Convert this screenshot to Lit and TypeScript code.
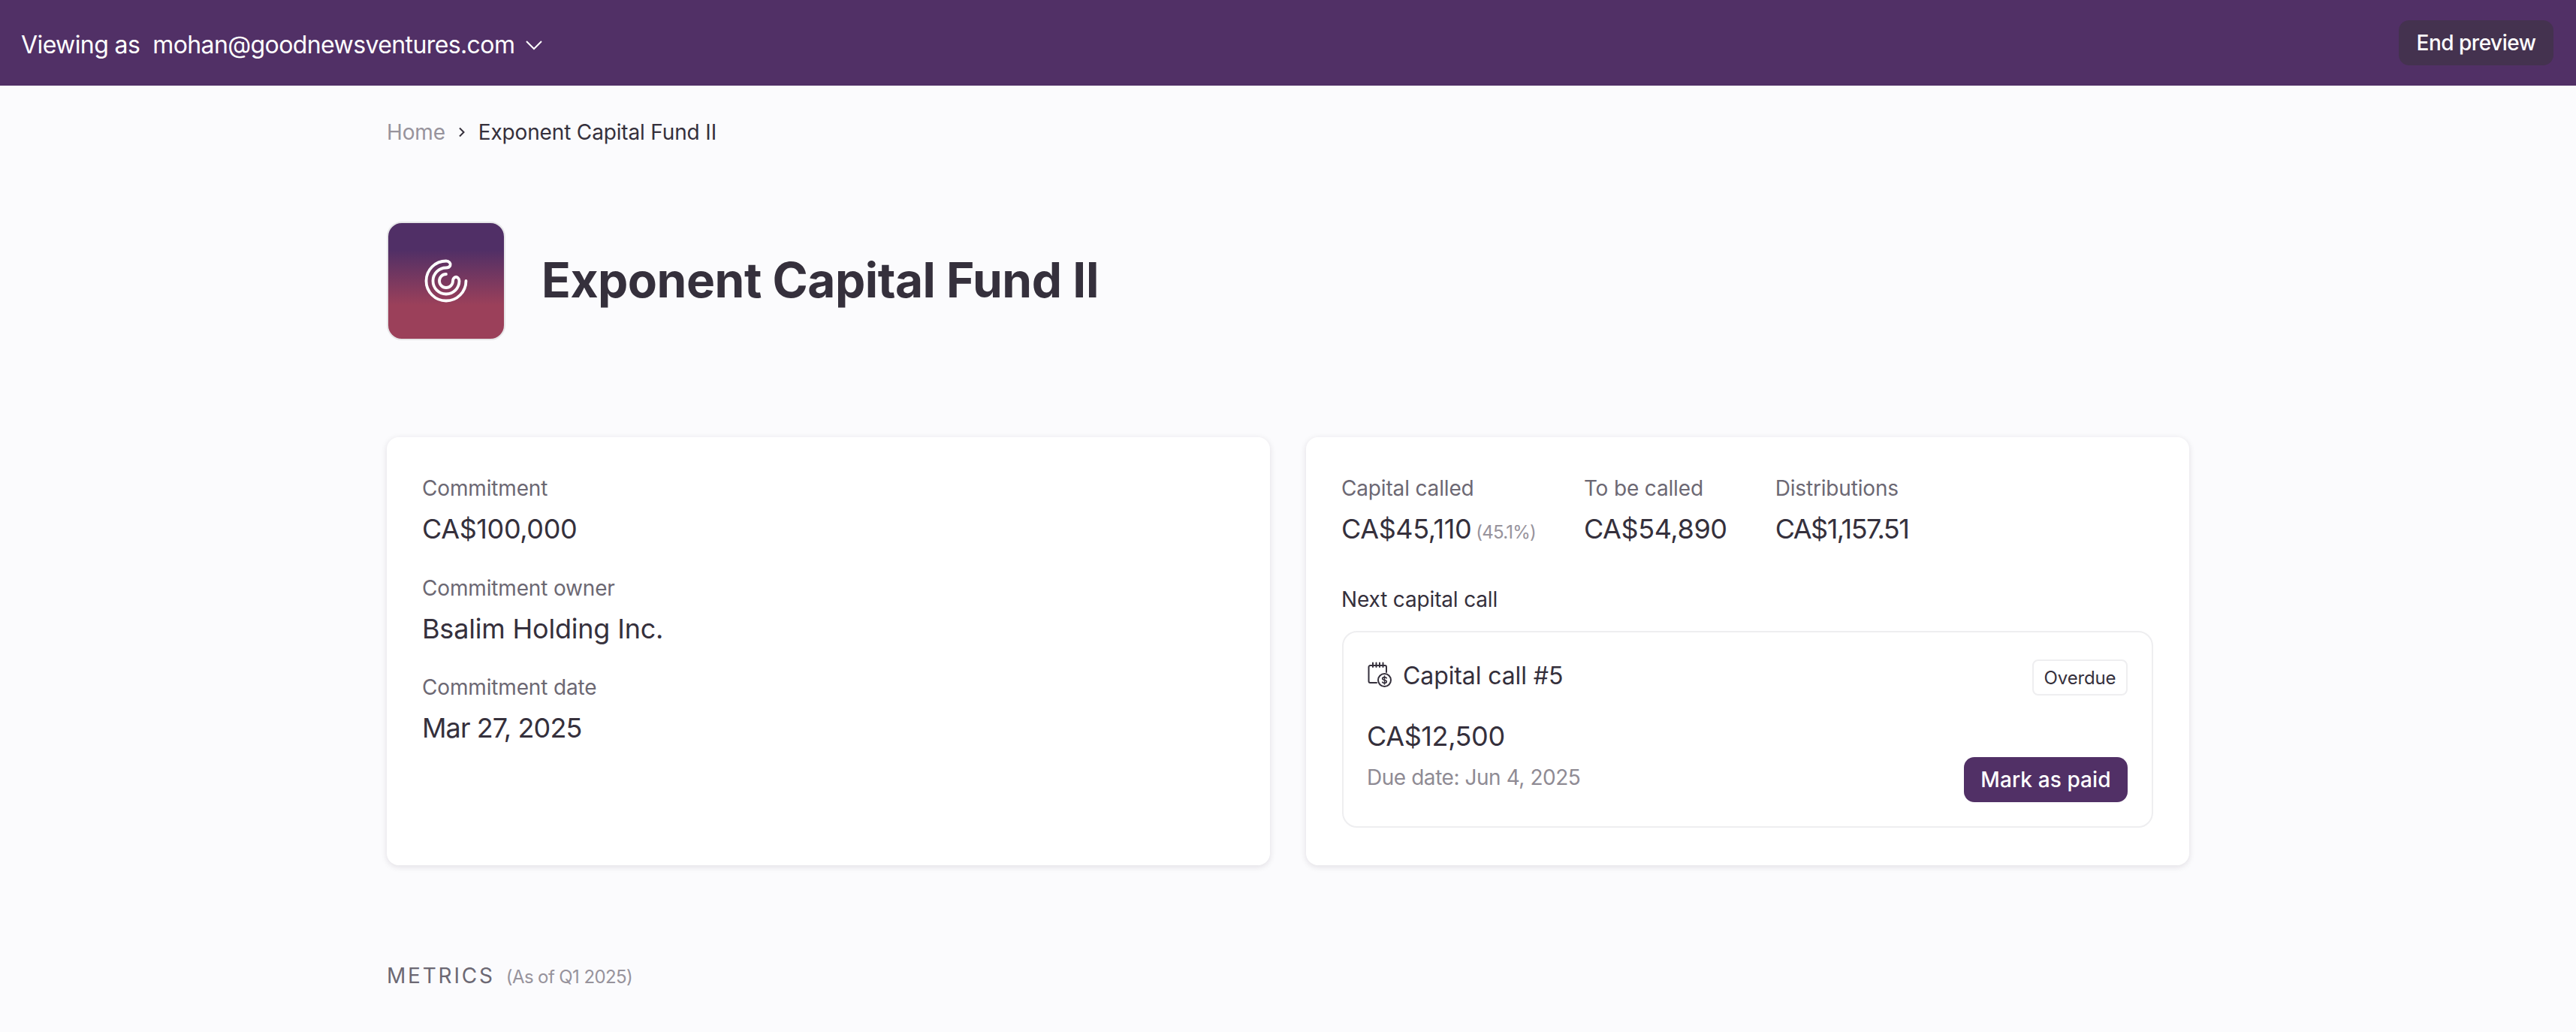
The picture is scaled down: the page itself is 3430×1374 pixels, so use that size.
import { LitElement, css, html } from "lit";
import { customElement } from "lit/decorators.js";

const chevronDown = html`<svg class="chev" width="24" height="14" viewBox="0 0 24 14" fill="none" stroke="currentColor" stroke-width="2"><path d="M2 2l10 10L22 2" /></svg>`;

const crumbChevron = html`<svg width="10" height="14" viewBox="0 0 10 14" fill="none" stroke="currentColor" stroke-width="2"><path d="M2 1.500l5.500 5.500L2 12.500" /></svg>`;

const spiral = html`<svg width="66" height="66" viewBox="0 0 66 66" fill="none" stroke="#fff" stroke-width="3.8" stroke-linecap="round">
  <path d="M59.500 33A26.500 26.500 0 1 1 33 6.500C37 6.500 39.500 10 38.500 12.500C37.500 15 35 15.500 33 15.500A17.500 17.500 0 1 0 50.500 33C50.500 29.500 47.500 27 45 28C43 29 42 31 42 33A9 9 0 1 1 33 24" />
</svg>`;

const calendarDollar = html`<svg class="cal" width="36" height="36" viewBox="0 0 36 36" fill="none" stroke="#35303c" stroke-width="2" stroke-linecap="round" stroke-linejoin="round">
  <path d="M13 28H4.500a2 2 0 0 1-2-2V7a2 2 0 0 1 2-2H24a2 2 0 0 1 2 2v7" />
  <path d="M8 1.500V7M12.500 1.500V7M17 1.500V7M21.500 1.500V7" />
  <circle cx="23.500" cy="24.500" r="8.500" />
  <path d="M26.300 21.800c-.6-.9-1.600-1.200-2.800-1.200-1.600 0-2.800.8-2.800 1.900 0 2.700 5.600 1.300 5.600 4 0 1.200-1.200 1.900-2.800 1.900-1.200 0-2.200-.4-2.800-1.200M23.500 19v11" stroke-width="1.600" />
</svg>`;

@customElement("app-root")
export class AppRoot extends LitElement {
  static styles = css`
    :host {
      display: block;
      min-height: 100vh;
      background: #fbfbfd;
      color: #35303c;
      font-family: "Inter", "Liberation Sans", sans-serif;
      letter-spacing: -0.01em;
    }

    .topbar {
      height: 114px;
      background: #513066;
      color: #fff;
      display: flex;
      align-items: center;
      justify-content: space-between;
      padding: 0 30px 0 28px;
      font-size: 32px;
    }

    .viewer {
      display: flex;
      align-items: center;
      padding-top: 4px;
      letter-spacing: -0.6px;
    }

    .viewer .email {
      margin-left: 17px;
    }

    .chev {
      margin-left: 14px;
      margin-top: 2px;
    }

    .end-btn {
      height: 60px;
      width: 206px;
      border: 0;
      border-radius: 14px;
      background: #44324f;
      color: #fff;
      font: 500 28px "Inter", sans-serif;
      letter-spacing: -0.5px;
    }

    main {
      width: 2400px;
      margin: 0 auto;
      padding-top: 42px;
    }

    .crumbs {
      display: flex;
      align-items: center;
      gap: 17px;
      font-size: 28px;
      line-height: 40px;
    }

    .crumbs .home {
      color: #97939c;
    }

    .title-row {
      display: flex;
      align-items: center;
      gap: 48px;
      margin-top: 99px;
    }

    .logo {
      width: 158px;
      height: 158px;
      box-sizing: border-box;
      border: 2px solid #e6e6e8;
      border-radius: 20px;
      background: linear-gradient(180deg, #502f66 23%, #9b405a 71%);
      display: flex;
      align-items: center;
      justify-content: center;
    }

    h1 {
      margin: 0;
      padding-bottom: 3px;
      font-size: 64px;
      font-weight: 650;
      line-height: 80px;
      letter-spacing: -0.5px;
    }

    .cards {
      display: grid;
      grid-template-columns: 1176px 1176px;
      gap: 48px;
      margin-top: 129px;
    }

    .card {
      height: 570px;
      box-sizing: border-box;
      padding: 48px 48px 48px 47px;
      background: #fff;
      border-radius: 16px;
      box-shadow: 0 2px 8px rgba(30, 20, 40, 0.12);
    }

    .label {
      font-size: 28px;
      line-height: 40px;
      color: #6c6873;
      margin-bottom: 8px;
    }

    .value {
      font-size: 36px;
      line-height: 52px;
      letter-spacing: -0.4px;
    }

    .value.owner {
      letter-spacing: -0.2px;
    }

    .value.date {
      letter-spacing: -0.9px;
    }

    .value.narrow {
      letter-spacing: -1.5px;
    }

    .field + .field {
      margin-top: 32.5px;
    }

    .stats {
      display: flex;
      gap: 64px;
    }

    .pct {
      font-size: 24px;
      line-height: 1;
      color: #97939c;
      margin-left: 6px;
      letter-spacing: -0.8px;
    }

    .next-label {
      font-size: 28px;
      line-height: 40px;
      margin-top: 48px;
    }

    .call {
      margin: 22px 0 0 1px;
      height: 262px;
      box-sizing: border-box;
      border: 2px solid #eeeef0;
      border-radius: 20px;
      padding: 32px 32px 32px 31px;
    }

    .call-head {
      display: flex;
      align-items: center;
      justify-content: space-between;
      height: 56px;
    }

    .call-title {
      display: flex;
      align-items: center;
      gap: 12px;
      padding-bottom: 6px;
      font-size: 32px;
      letter-spacing: -0.1px;
    }

    .badge {
      height: 48px;
      width: 127px;
      box-sizing: border-box;
      border: 2px solid #eeeef0;
      border-radius: 8px;
      font-size: 24px;
      display: flex;
      align-items: center;
      justify-content: center;
    }

    .call-body {
      display: flex;
      align-items: flex-end;
      justify-content: space-between;
      margin-top: 24px;
    }

    .due {
      font-size: 28px;
      line-height: 40px;
      letter-spacing: -0.45px;
      color: #8f8b94;
      margin: 9px 0 13px;
    }

    .pay-btn {
      height: 60px;
      width: 218px;
      border: 0;
      border-radius: 14px;
      background: #513066;
      color: #fff;
      font: 500 28px "Inter", sans-serif;
      letter-spacing: 0.1px;
    }

    .metrics {
      display: flex;
      align-items: baseline;
      gap: 15px;
      margin-top: 127px;
      line-height: 40px;
    }

    .metrics .heading {
      font-size: 28px;
      letter-spacing: 2.8px;
      color: #6c6873;
    }

    .metrics .asof {
      font-size: 24px;
      letter-spacing: -0.6px;
      color: #97939c;
    }
  `;

  render() {
    return html`
      <div class="topbar">
        <div class="viewer">
          <span>Viewing as</span>
          <span class="email">mohan@goodnewsventures.com</span>
          ${chevronDown}
        </div>
        <button class="end-btn">End preview</button>
      </div>
      <main>
        <div class="crumbs">
          <span class="home">Home</span>
          ${crumbChevron}
          <span>Exponent Capital Fund II</span>
        </div>
        <div class="title-row">
          <div class="logo">${spiral}</div>
          <h1>Exponent Capital Fund II</h1>
        </div>
        <div class="cards">
          <section class="card">
            <div class="field">
              <div class="label">Commitment</div>
              <div class="value">CA$100,000</div>
            </div>
            <div class="field">
              <div class="label">Commitment owner</div>
              <div class="value owner">Bsalim Holding Inc.</div>
            </div>
            <div class="field">
              <div class="label">Commitment date</div>
              <div class="value date">Mar 27, 2025</div>
            </div>
          </section>
          <section class="card">
            <div class="stats">
              <div>
                <div class="label">Capital called</div>
                <div class="value">CA$45,110<span class="pct">(45.1%)</span></div>
              </div>
              <div>
                <div class="label">To be called</div>
                <div class="value">CA$54,890</div>
              </div>
              <div>
                <div class="label">Distributions</div>
                <div class="value narrow">CA$1,157.51</div>
              </div>
            </div>
            <div class="next-label">Next capital call</div>
            <div class="call">
              <div class="call-head">
                <div class="call-title">${calendarDollar}<span>Capital call #5</span></div>
                <div class="badge">Overdue</div>
              </div>
              <div class="call-body">
                <div>
                  <div class="value">CA$12,500</div>
                  <div class="due">Due date: Jun 4, 2025</div>
                </div>
                <button class="pay-btn">Mark as paid</button>
              </div>
            </div>
          </section>
        </div>
        <div class="metrics">
          <span class="heading">METRICS</span>
          <span class="asof">(As of Q1 2025)</span>
        </div>
      </main>
    `;
  }
}
